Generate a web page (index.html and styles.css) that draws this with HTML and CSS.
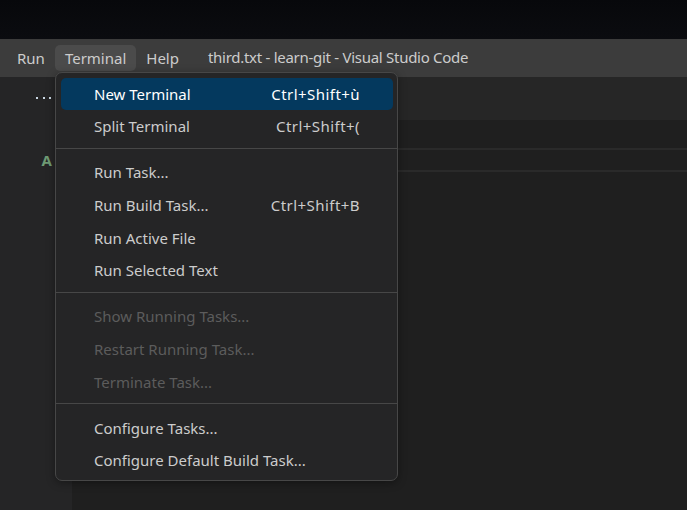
FILE: index.html
```html
<!DOCTYPE html>
<html>
<head>
<meta charset="utf-8">
<link rel="stylesheet" href="styles.css">
</head>
<body>
<div class="screen">
  <div class="desk"></div>
  <div class="titlebar">
    <div class="menubar">
      <span class="mb-item">Run</span>
      <span class="mb-item active">Terminal</span>
      <span class="mb-item">Help</span>
    </div>
    <div class="title">third.txt - learn-git - Visual Studio Code</div>
  </div>
  <div class="main">
    <div class="sidebar">
      <div class="sb-head"><span class="dots"><i></i><i></i><i></i></span></div>
      <div class="sb-row"><span class="added">A</span></div>
    </div>
    <div class="editor">
      <div class="tabs"></div>
      <div class="code">
        <div class="curline"></div>
      </div>
    </div>
  </div>

  <div class="menu">
    <div class="item selected"><span>New Terminal</span><span class="key">Ctrl+Shift+ù</span></div>
    <div class="item"><span>Split Terminal</span><span class="key">Ctrl+Shift+(</span></div>
    <div class="sep"></div>
    <div class="item"><span>Run Task...</span></div>
    <div class="item"><span>Run Build Task...</span><span class="key">Ctrl+Shift+B</span></div>
    <div class="item"><span>Run Active File</span></div>
    <div class="item"><span>Run Selected Text</span></div>
    <div class="sep"></div>
    <div class="item disabled"><span>Show Running Tasks...</span></div>
    <div class="item disabled"><span>Restart Running Task...</span></div>
    <div class="item disabled"><span>Terminate Task...</span></div>
    <div class="sep"></div>
    <div class="item"><span>Configure Tasks...</span></div>
    <div class="item"><span>Configure Default Build Task...</span></div>
  </div>
</div>
</body>
</html>
```

FILE: styles.css
```css
html, body {
  margin: 0;
  padding: 0;
  background: #090a0d;
}
.screen {
  position: relative;
  width: 687px;
  height: 510px;
  overflow: hidden;
  display: flex;
  flex-direction: column;
  font-family: "Noto Sans", "Open Sans", sans-serif;
  font-size: 15px;
  color: #cccccc;
}
.desk {
  height: 39px;
  background: linear-gradient(180deg, #07080b 0%, #0b0c10 100%);
  flex: none;
}
.titlebar {
  height: 38px;
  flex: none;
  background: #3c3c3c;
  display: flex;
  align-items: center;
}
.menubar {
  display: flex;
  padding-left: 7px;
  height: 100%;
  align-items: center;
}
.mb-item {
  padding: 0 10px;
  height: 26px;
  line-height: 26px;
  border-radius: 5px;
  margin-top: -1px;
}
.mb-item.active {
  background: #4b4b4b;
}
.title {
  margin-left: 19px;
  margin-top: -2px;
  letter-spacing: -0.28px;
}
.main {
  flex: 1;
  display: flex;
}
.sidebar {
  width: 72px;
  flex: none;
  background: #252526;
  box-sizing: border-box;
  padding-right: 20px;
}
.sb-head {
  height: 42px;
  display: flex;
  justify-content: flex-end;
  align-items: center;
}
.dots {
  display: flex;
  gap: 4.5px;
  margin-right: 1px;
}
.dots i {
  display: block;
  width: 2px;
  height: 2px;
  background: #c9d6e2;
}
.sb-row {
  height: 50px;
  display: flex;
  justify-content: flex-end;
  align-items: flex-end;
}
.added {
  color: #6e9a74;
  font-weight: 700;
  font-size: 15px;
  line-height: 18px;
}
.editor {
  flex: 1;
  display: flex;
  flex-direction: column;
}
.tabs {
  height: 43px;
  background: #262626;
  flex: none;
}
.code {
  flex: 1;
  background: #1f1f1f;
  padding-top: 28px;
}
.curline {
  height: 20px;
  border-top: 2px solid #2a2a2a;
  border-bottom: 2px solid #2a2a2a;
}
.menu {
  position: absolute;
  left: 55px;
  top: 71.5px;
  width: 343px;
  box-sizing: border-box;
  background: #252526;
  border: 1px solid #474747;
  border-radius: 7px;
  padding: 5px 4px 3px 5px;
  box-shadow: 0 2px 8px rgba(0, 0, 0, 0.36);
}
.item {
  height: 32.6px;
  display: flex;
  align-items: center;
  justify-content: space-between;
  padding: 0 33px 0 33px;
  border-radius: 5px;
}
.key {
  letter-spacing: 0.45px;
}
.item.selected {
  background: #04395e;
  color: #ffffff;
}
.item.disabled {
  color: #5c5c5c;
}
.sep {
  height: 1px;
  background: #474747;
  margin: 5.5px -4px 7px -5px;
}
```
